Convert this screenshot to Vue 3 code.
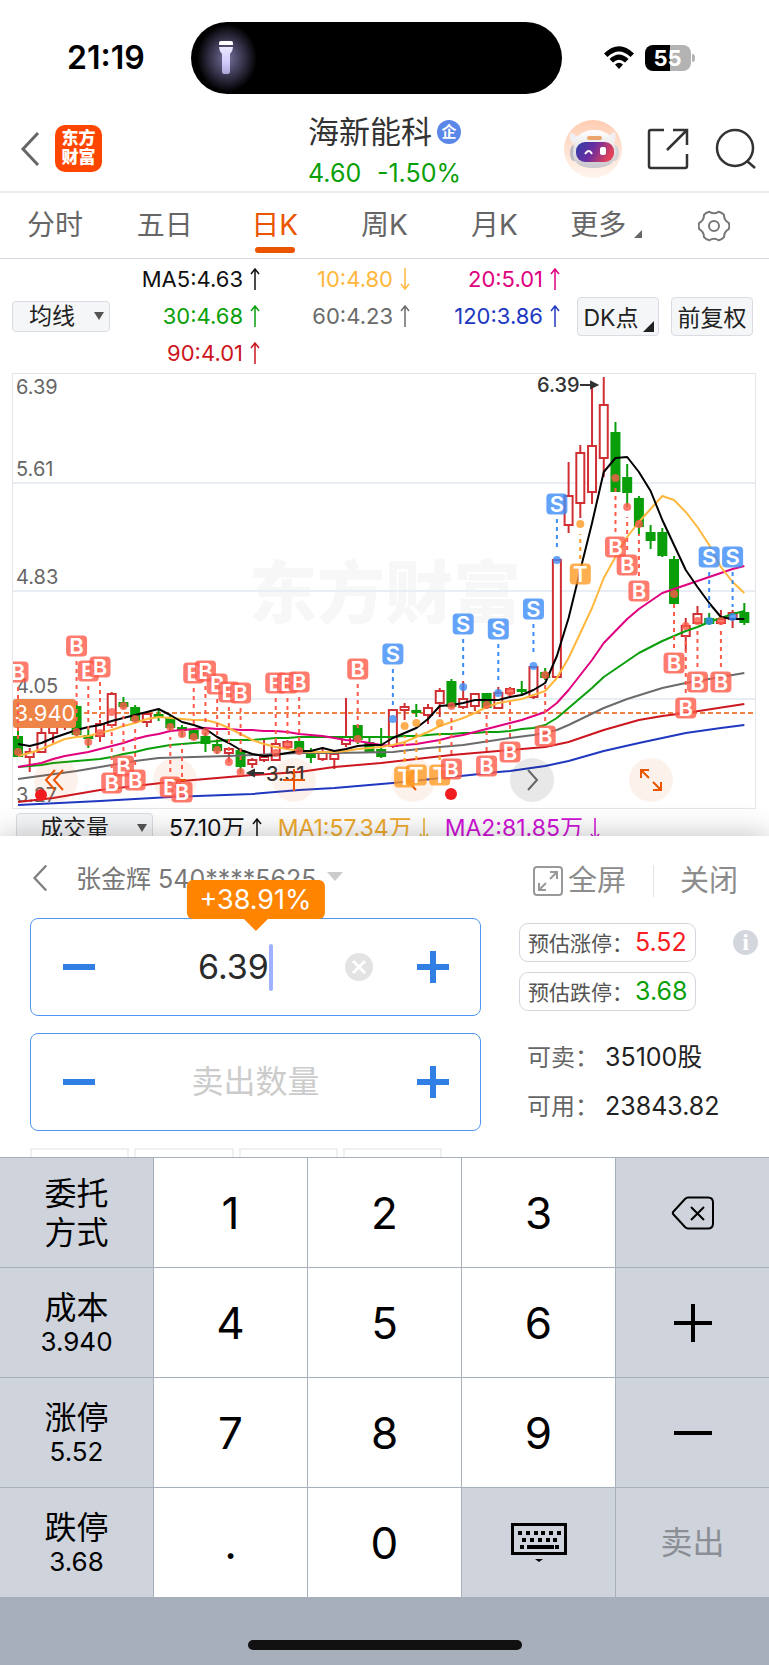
<template>
  <div class="page">
    <div class="status-bar">
      <span class="clock">21:19</span>
      <div class="island">
        <svg class="torch" viewBox="0 0 60 72" aria-hidden="true">
          <defs>
            <radialGradient id="glow">
              <stop offset="0" stop-color="#77729c" />
              <stop offset="0.55" stop-color="#37344c" />
              <stop offset="1" stop-color="#000" />
            </radialGradient>
            <linearGradient id="torchBody" x2="0" y2="1">
              <stop offset="0" stop-color="#ebe8ff" />
              <stop offset="0.6" stop-color="#cfc9fb" />
              <stop offset="1" stop-color="#aaa6d4" />
            </linearGradient>
          </defs>
          <ellipse cx="30" cy="36" rx="30" ry="34" fill="url(#glow)" />
          <path d="M22 23v-2q0-2 2-2h10q2 0 2 2v2z" fill="#fff" />
          <path d="M22 25h14q0 4-3 7v17q0 3-2 3h-4q-2 0-2-3V32q-3-3-3-7z" fill="url(#torchBody)" />
        </svg>
      </div>
      <div class="status-right">
        <svg class="wifi" viewBox="0 0 32 26" aria-hidden="true">
          <path d="M1 8.500Q16-6 31 8.500L27.500 12Q16 1 4.500 12z" />
          <path d="M6.500 14Q16 5 25.500 14L22 17.500Q16 12 10 17.500z" />
          <path d="M12 19.500Q16 16 20 19.500L16 24z" />
        </svg>
        <span class="battery">55</span>
      </div>
    </div>

    <header class="header">
      <div class="header-left">
        <button class="icon-button" aria-label="返回">
          <svg class="back" viewBox="0 0 20 36"><path d="M18 2L3 18l15 16" /></svg>
        </button>
        <a class="brand" href="#">东方<br />财富</a>
      </div>
      <div class="stock">
        <h1>海新能科<span class="tag-enterprise">企</span></h1>
        <p><span>4.60</span><span>-1.50%</span></p>
      </div>
      <div class="header-right">
        <button class="icon-button" aria-label="智能助手">
          <svg class="robot" viewBox="0 0 60 60">
            <defs>
              <linearGradient id="peach" x2="0" y2="1">
                <stop offset="0" stop-color="#ffcdb2" />
                <stop offset="1" stop-color="#fff5ef" />
              </linearGradient>
              <linearGradient id="visor" x2="1" y2="0.300">
                <stop offset="0" stop-color="#2c3fa8" />
                <stop offset="0.5" stop-color="#6a2da0" />
                <stop offset="1" stop-color="#e0405a" />
              </linearGradient>
              <linearGradient id="shell" x2="0" y2="1">
                <stop offset="0" stop-color="#fff" />
                <stop offset="1" stop-color="#c9c6cc" />
              </linearGradient>
            </defs>
            <circle cx="30" cy="30" r="29" fill="url(#peach)" />
            <path d="M10 25Q5 19 8 13q4 5 10 4zM50 25q5-7 1-13q-4 6-10 5z" fill="#f1eff2" />
            <ellipse cx="11" cy="34" rx="4" ry="8" fill="#b9b7c2" />
            <ellipse cx="52" cy="34" rx="4" ry="8" fill="#d5d2d8" />
            <path d="M10 33Q11 11 31 11t22 22q0 16-22 16T10 33z" fill="url(#shell)" />
            <rect x="24" y="17" width="15" height="4" rx="2" fill="#e9a56c" />
            <rect x="13" y="23" width="38" height="20" rx="9" fill="url(#visor)" />
            <path d="M22 35q4-6 7 0" fill="none" stroke="#fff" stroke-width="2" />
            <rect x="37" y="28" width="6" height="8" rx="2" fill="#fff" />
          </svg>
        </button>
        <button class="icon-button" aria-label="分享">
          <svg class="line-icon" viewBox="0 0 42 42">
            <path d="M17 2H4q-2 0-2 2v34q0 2 2 2h34q2 0 2-2V26M26 2h14v15M39 3L20 22" />
          </svg>
        </button>
        <button class="icon-button" aria-label="搜索">
          <svg class="line-icon" viewBox="0 0 42 42">
            <circle cx="20" cy="20" r="18" />
            <path d="M32 33l8 7" />
          </svg>
        </button>
      </div>
    </header>

    <nav class="tabs">
      <a v-for="tab in tabs" :key="tab" href="#" :class="{ active: tab === '日K' }">{{ tab }}</a>
      <a href="#" class="more">更多</a>
      <button class="icon-button" aria-label="设置">
        <svg class="gear" viewBox="0 0 32 32">
          <path
            d="M30.700 12.900Q32 16 30.700 19.100Q26 21.800 26 27.100Q24 29.500 20.600 30.300Q16 27 11.400 30.300Q8 29.500 6 27.100Q6 21.800 1.300 19.100Q0 16 1.300 12.900Q6 10.200 6 4.900Q8 2.500 11.400 1.700Q16 5 20.600 1.700Q24 2.500 26 4.900Q26 10.200 30.700 12.900z"
          />
          <circle cx="16" cy="16" r="5" />
        </svg>
      </button>
    </nav>

    <section class="indicators">
      <div class="picker">
        <select aria-label="主图指标">
          <option>均线</option>
        </select>
      </div>
      <ul class="averages">
        <li v-for="ma in averages" :key="ma.text" :class="ma.tone">
          {{ ma.text }}
          <svg class="trend" :class="{ down: ma.down }" viewBox="0 0 10 22">
            <path d="M5 22V1M1 6l4-5 4 5" />
          </svg>
        </li>
      </ul>
      <button class="tool corner">DK点</button>
      <button class="tool">前复权</button>
    </section>

    <section class="chart">
      <svg viewBox="0 0 769 441" class="layer-base" role="img" aria-label="日K线图">
        <text x="385" y="248" class="watermark">东方财富</text>
        <path d="M13 113H756M13 221H756M13 329H756" class="grid" />
        <rect x="12.500" y="3.500" width="743" height="435" class="frame" />
        <text v-for="tick in ticks" :key="tick.label" x="16" :y="tick.y" class="tick">
          {{ tick.label }}
        </text>
        <path d="M76 343H756" class="cost-line" />

        <g v-for="(c, i) in candles" :key="i" :class="c[0] ? 'rise' : 'fall'">
          <path :d="wick(c, i)" />
          <rect :x="xAt(i) - 4" :y="c[2]" width="8" :height="Math.max(c[3] - c[2], 1)" />
        </g>
        <polyline
          v-for="line in lines"
          :key="line.name"
          :points="line.points"
          :stroke="line.color"
          class="average-line"
        />

        <text x="537" y="22" class="extreme">6.39</text>
        <path d="M580 15h13M591 12l6 3-6 3z" class="arrow" />
        <text x="266" y="411" class="extreme">3.51</text>
        <path d="M264 403h-12M254 400l-6 3 6 3z" class="arrow" />
        <rect x="13" y="329" width="63" height="29" rx="3" class="cost-tag" />
        <text x="45" y="351" class="cost-text">3.940</text>
      </svg>

      <div class="chart-controls">
        <button v-for="c in controls" :key="c.name" :aria-label="c.name" :class="{ gray: c.gray }">
          <svg viewBox="0 0 44 44"><path :d="c.path" /></svg>
        </button>
      </div>

      <svg viewBox="0 0 769 441" class="layer-marks" aria-hidden="true">
        <clipPath id="plot"><rect x="13" y="3" width="743" height="436" /></clipPath>
        <g clip-path="url(#plot)">
          <g v-for="m in marks" :key="m[1]" :class="'mark-' + m[0]">
            <path :d="dash(m)" />
            <circle :cx="xAt(m[1])" :cy="m[3]" r="4" />
            <rect :x="xAt(m[1]) - 10.5" :y="m[2] - 10.5" width="21" height="21" rx="4" />
            <text :x="xAt(m[1])" :y="m[2] + 8">{{ m[0] }}</text>
          </g>
          <circle cx="41" cy="425" r="6" class="event" />
          <circle cx="451" cy="424" r="6" class="event" />
        </g>
      </svg>
    </section>

    <section class="volume">
      <div class="picker wide">
        <select aria-label="副图指标">
          <option>成交量</option>
        </select>
      </div>
      <span v-for="v in volumes" :key="v.text" :class="v.tone">
        {{ v.text }}
        <svg class="trend" :class="{ down: v.down }" viewBox="0 0 10 22">
          <path d="M5 22V1M1 6l4-5 4 5" />
        </svg>
      </span>
    </section>

    <section class="trade">
      <div class="trade-head">
        <button class="icon-button" aria-label="收起">
          <svg class="back small" viewBox="0 0 20 36"><path d="M18 2L3 18l15 16" /></svg>
        </button>
        <button class="account">张金辉 540****5625</button>
        <div class="head-actions">
          <button class="head-action">
            <svg class="fullscreen" viewBox="0 0 30 30">
              <rect x="1" y="1" width="28" height="28" rx="3" />
              <path d="M17 13l7-7M17 6h7v7M13 17l-7 7M6 17v7h7" />
            </svg>全屏
          </button>
          <button class="head-action close">关闭</button>
        </div>
      </div>

      <div class="trade-body">
        <div class="fields">
          <div class="stepper">
            <output class="bubble">+38.91%</output>
            <button class="step" aria-label="减少价格">
              <svg viewBox="0 0 32 32"><path d="M0 16h32" /></svg>
            </button>
            <div class="price">
              <input v-model="price" aria-label="卖出价格" inputmode="none" />
              <span class="caret"></span>
            </div>
            <button class="clear" aria-label="清空" @click="price = ''">
              <svg viewBox="0 0 28 28"><path d="M8 8l12 12M20 8L8 20" /></svg>
            </button>
            <button class="step" aria-label="增加价格">
              <svg viewBox="0 0 32 32"><path d="M0 16h32M16 0v32" /></svg>
            </button>
          </div>
          <div class="stepper">
            <button class="step" aria-label="减少数量">
              <svg viewBox="0 0 32 32"><path d="M0 16h32" /></svg>
            </button>
            <input
              v-model="amount"
              class="amount"
              aria-label="卖出数量"
              placeholder="卖出数量"
              inputmode="none"
            />
            <button class="step" aria-label="增加数量">
              <svg viewBox="0 0 32 32"><path d="M0 16h32M16 0v32" /></svg>
            </button>
          </div>
          <div class="shares"><i></i><i></i><i></i><i></i></div>
        </div>

        <div class="facts">
          <div class="limit-row">
            <button class="limit">预估涨停：<b class="red">5.52</b></button>
            <button class="info" aria-label="说明">i</button>
          </div>
          <div class="limit-row">
            <button class="limit">预估跌停：<b class="green">3.68</b></button>
          </div>
          <dl>
            <dt>可卖：</dt>
            <dd>35100股</dd>
            <dt>可用：</dt>
            <dd>23843.82</dd>
          </dl>
        </div>
      </div>
    </section>

    <section class="keypad">
      <button class="side">委托<br />方式</button>
      <button @click="press('1')">1</button>
      <button @click="press('2')">2</button>
      <button @click="press('3')">3</button>
      <button class="side" aria-label="删除" @click="price = price.slice(0, -1)">
        <svg class="backspace" viewBox="0 0 44 34">
          <path d="M17 1.500h20q5 0 5 5v21q0 5-5 5H17q-1.500 0-3-1.500L2.500 18.500q-1.500-1.500 0-3L14 3q1.500-1.500 3-1.500z" />
          <path d="M20 11l13 13M33 11L20 24" />
        </svg>
      </button>

      <button class="side">成本<small>3.940</small></button>
      <button @click="press('4')">4</button>
      <button @click="press('5')">5</button>
      <button @click="press('6')">6</button>
      <button class="side" aria-label="加">
        <svg class="sign" viewBox="0 0 38 38"><path d="M0 19h38M19 0v38" /></svg>
      </button>

      <button class="side">涨停<small>5.52</small></button>
      <button @click="press('7')">7</button>
      <button @click="press('8')">8</button>
      <button @click="press('9')">9</button>
      <button class="side" aria-label="减">
        <svg class="sign" viewBox="0 0 38 38"><path d="M0 19h38" /></svg>
      </button>

      <button class="side">跌停<small>3.68</small></button>
      <button @click="press('.')">.</button>
      <button @click="press('0')">0</button>
      <button class="side" aria-label="收起键盘">
        <svg class="keyboard" viewBox="0 0 56 40">
          <rect x="1.500" y="1.500" width="53" height="29" />
          <path
            d="M7 10h4M15 10h4M23 10h4M30 10h4M38 10h4M46 10h4M11 17h4M19 17h4M27 17h4M35 17h4M42 17h4M9 24h4M16 24h27M44 24h4"
          />
          <path d="M24 36h8l-4 3z" class="solid" />
        </svg>
      </button>
      <button class="side" disabled>卖出</button>
    </section>

    <div class="home-area"><span></span></div>
  </div>
</template>

<script setup>
import { ref } from "vue";

const price = ref("6.39");
const amount = ref("");

function press(key) {
  price.value += key;
}

const tabs = ["分时", "五日", "日K", "周K", "月K"];

const averages = [
  { text: "MA5:4.63", tone: "black" },
  { text: "10:4.80", tone: "yellow", down: true },
  { text: "20:5.01", tone: "pink" },
  { text: "30:4.68", tone: "green" },
  { text: "60:4.23", tone: "gray" },
  { text: "120:3.86", tone: "blue" },
  { text: "90:4.01", tone: "crimson" },
];

const volumes = [
  { text: "57.10万", tone: "black" },
  { text: "MA1:57.34万", tone: "gold", down: true },
  { text: "MA2:81.85万", tone: "purple", down: true },
];

const ticks = [
  { label: "6.39", y: 24 },
  { label: "5.61", y: 106 },
  { label: "4.83", y: 214 },
  { label: "4.05", y: 323 },
  { label: "3.27", y: 432 },
];

const controls = [
  { name: "最早", path: "M21 12l-9 10 9 10M29 12l-9 10 9 10" },
  { name: "缩小", path: "M11 22h22" },
  { name: "放大", path: "M11 22h22M22 11v22" },
  { name: "向前", path: "M25 12l-9 10 9 10" },
  { name: "向后", path: "M18 12l9 10-9 10", gray: true },
  { name: "全屏", path: "M12 20v-8h8M12 12l8 8M24 24l8 8M32 24v8h-8" },
];

// [rising, high, body top, body bottom, low]
const candles = [
  [0, 359, 367, 386, 387],
  [1, 378, 382, 387, 402],
  [1, 352, 363, 382, 383],
  [1, 345, 352, 363, 373],
  [1, 335, 345, 350, 360],
  [0, 333, 337, 364, 368],
  [0, 358, 366, 368, 378],
  [1, 350, 354, 366, 372],
  [1, 322, 324, 355, 356],
  [0, 327, 333, 336, 339],
  [0, 335, 338, 350, 352],
  [1, 342, 344, 352, 357],
  [0, 340, 345, 346, 351],
  [0, 345, 349, 357, 360],
  [0, 355, 358, 360, 367],
  [0, 359, 361, 368, 370],
  [0, 362, 367, 373, 382],
  [0, 370, 375, 380, 384],
  [1, 378, 379, 383, 392],
  [0, 378, 381, 396, 403],
  [1, 388, 390, 394, 398],
  [1, 370, 387, 390, 392],
  [1, 370, 374, 390, 391],
  [1, 370, 372, 377, 380],
  [0, 369, 372, 380, 382],
  [0, 378, 383, 387, 393],
  [1, 377, 382, 389, 391],
  [1, 382, 384, 389, 399],
  [1, 328, 367, 374, 377],
  [0, 356, 356, 369, 374],
  [0, 368, 373, 382, 383],
  [0, 358, 380, 386, 388],
  [1, 340, 340, 376, 378],
  [1, 333, 337, 340, 350],
  [0, 334, 341, 342, 347],
  [1, 334, 338, 345, 354],
  [1, 318, 321, 333, 347],
  [0, 309, 312, 336, 338],
  [1, 311, 329, 337, 339],
  [1, 323, 324, 336, 341],
  [0, 324, 324, 337, 339],
  [1, 317, 323, 338, 339],
  [1, 317, 319, 323, 327],
  [0, 311, 320, 321, 325],
  [1, 297, 297, 327, 329],
  [0, 298, 303, 307, 310],
  [1, 190, 190, 307, 307],
  [1, 92, 126, 155, 163],
  [1, 75, 83, 133, 148],
  [1, 12, 76, 122, 134],
  [1, 7, 35, 88, 107],
  [0, 52, 63, 121, 121],
  [0, 94, 108, 122, 137],
  [0, 126, 129, 156, 164],
  [0, 155, 163, 170, 179],
  [0, 158, 163, 185, 187],
  [0, 186, 190, 233, 236],
  [1, 248, 256, 266, 281],
  [1, 236, 244, 253, 254],
  [0, 243, 249, 253, 255],
  [1, 240, 249, 253, 255],
  [1, 240, 243, 249, 258],
  [0, 233, 243, 252, 255],
];

// [letter, candle index, badge y, dot y]
const marks = [
  ["B", 0, 302, 382],
  ["B", 5, 276, 362],
  ["B", 6, 301, 372],
  ["B", 7, 297, 363],
  ["B", 8, 413, 342],
  ["B", 9, 396, 336],
  ["B", 10, 410, 349],
  ["B", 13, 417, 357],
  ["B", 14, 422, 364],
  ["B", 15, 303, 367],
  ["B", 16, 301, 362],
  ["B", 17, 314, 380],
  ["B", 18, 322, 392],
  ["B", 19, 323, 402],
  ["B", 22, 313, 383],
  ["B", 23, 313, 375],
  ["B", 24, 312, 381],
  ["B", 29, 299, 369],
  ["S", 32, 284, 349],
  ["T", 33, 407, 356],
  ["T", 34, 405, 353],
  ["T", 36, 405, 353],
  ["B", 37, 399, 336],
  ["S", 38, 254, 317],
  ["B", 40, 396, 335],
  ["S", 41, 259, 323],
  ["B", 42, 382, 322],
  ["S", 44, 239, 296],
  ["B", 45, 366, 305],
  ["S", 46, 134, 190],
  ["T", 48, 204, 154],
  ["B", 51, 177, 108],
  ["B", 52, 195, 137],
  ["B", 53, 221, 154],
  ["B", 56, 293, 224],
  ["B", 57, 338, 256],
  ["B", 58, 312, 251],
  ["S", 59, 187, 251],
  ["B", 60, 312, 251],
  ["S", 61, 187, 247],
];

function xAt(i) {
  return 18 + i * 11.715;
}

function wick([, high, top, bottom, low], i) {
  const x = xAt(i);
  return `M${x} ${high}V${top}M${x} ${bottom}V${low}`;
}

function dash([, i, badge, dot]) {
  const dir = badge < dot ? 1 : -1;
  return `M${xAt(i)} ${badge + dir * 15}V${dot - dir * 10}`;
}

function daily(values) {
  return values.map((y, i) => `${xAt(i)},${y}`).join(" ");
}

function sparse(pairs) {
  return pairs.map(([i, y]) => `${xAt(i)},${y}`).join(" ");
}

const lines = [
  {
    name: "MA120",
    color: "#2038c0",
    points: sparse([
      [0, 435], [7, 431], [13, 427], [20, 424], [24, 420], [27, 418], [32, 413], [37, 407],
      [41, 402], [42, 401], [45, 396], [47, 391], [50, 381], [53, 373], [57, 363], [60, 358],
      [62, 355],
    ]),
  },
  {
    name: "MA90",
    color: "#cc1620",
    points: sparse([
      [0, 432], [3, 428], [7, 420], [10, 416], [13, 412], [16, 409], [20, 405], [24, 402],
      [27, 397], [31, 393], [34, 389], [37, 385], [40, 382], [42, 380], [45, 377], [47, 372],
      [50, 360], [53, 350], [55, 346], [57, 343], [62, 334],
    ]),
  },
  {
    name: "MA60",
    color: "#6b6b6b",
    points: sparse([
      [0, 409], [5, 401], [10, 391], [12, 388], [15, 387], [18, 386], [20, 385], [24, 383],
      [27, 383], [32, 382], [35, 378], [38, 375], [42, 368], [44, 365], [45, 363], [46, 360],
      [47, 355], [50, 338], [52, 329], [55, 318], [57, 313], [60, 307], [62, 303],
    ]),
  },
  {
    name: "MA30",
    color: "#0a9f0a",
    points: daily([
      397, 396, 395, 393, 392, 391, 390, 389, 387, 384, 382, 379, 377, 375, 374, 373, 372, 371,
      370, 370, 370, 369, 368, 368, 367, 367, 367, 367, 367, 367, 367, 367, 367, 366, 366, 365,
      364, 364, 363, 363, 362, 362, 361, 359, 358, 355, 348, 338, 328, 318, 307, 299, 291, 283,
      277, 271, 266, 261, 257, 252, 248, 244, 241,
    ]),
  },
  {
    name: "MA20",
    color: "#e0007f",
    points: daily([
      397, 395, 393, 389, 386, 384, 382, 379, 376, 373, 369, 366, 364, 361, 360, 359, 358, 359,
      359, 360, 360, 361, 361, 362, 364, 365, 366, 368, 370, 371, 373, 375, 376, 375, 374, 372,
      370, 367, 365, 362, 359, 356, 353, 350, 346, 342, 333, 320, 305, 290, 273, 261, 249, 239,
      231, 223, 219, 215, 211, 207, 203, 199, 196,
    ]),
  },
  {
    name: "MA10",
    color: "#ffb83d",
    points: daily([
      386, 383, 379, 374, 369, 367, 366, 363, 360, 356, 353, 349, 347, 348, 349, 350, 350, 353,
      358, 364, 370, 374, 377, 379, 381, 382, 382, 382, 381, 379, 378, 377, 375, 372, 367, 362,
      356, 352, 348, 343, 337, 333, 331, 329, 325, 321, 308, 288, 263, 238, 208, 187, 167, 152,
      139, 126, 130, 142, 157, 175, 197, 212, 223,
    ]),
  },
  {
    name: "MA5",
    color: "#000",
    points: daily([
      374, 376, 373, 368, 364, 360, 357, 355, 351, 348, 345, 342, 339, 345, 352, 355, 359, 367,
      373, 380, 384, 386, 385, 383, 381, 381, 378, 381, 379, 376, 375, 375, 368, 363, 358, 349,
      336, 335, 333, 330, 330, 330, 327, 325, 320, 313, 286, 248, 200, 153, 102, 88, 87, 102,
      121, 150, 175, 200, 217, 233, 247, 249, 249,
    ]),
  },
];
</script>

<style>
body {
  margin: 0;
  background: #fff;
}
</style>

<style scoped>
.page {
  font-family: Inter, "Noto Sans CJK SC", sans-serif;
  color: #222;
  overflow: hidden;
}
.page * {
  box-sizing: border-box;
}
button,
input,
select {
  font: inherit;
  color: inherit;
  margin: 0;
  padding: 0;
  border: 0;
  background: none;
  outline: none;
}
a {
  color: inherit;
  text-decoration: none;
}
svg {
  display: block;
  fill: none;
}
h1,
p,
ul,
dl,
dd {
  margin: 0;
  padding: 0;
  font-weight: 400;
}

.status-bar {
  display: grid;
  grid-template-columns: 1fr 371px 1fr;
  align-items: center;
  height: 104px;
  padding: 12px 17px 0 0;
}
.clock {
  padding-left: 67px;
  font-size: 32px;
  font-weight: 600;
  line-height: 72px;
  color: #000;
}
.island {
  height: 72px;
  border-radius: 36px;
  background: #000;
}
.torch {
  width: 60px;
  height: 72px;
  margin-left: 6px;
}
.status-right {
  display: flex;
  align-items: center;
  gap: 10px;
  padding-left: 41px;
}
.wifi {
  width: 32px;
  height: 26px;
  fill: #000;
}
.battery {
  position: relative;
  width: 46px;
  border-radius: 8px;
  background: linear-gradient(90deg, #000 55%, #b3b3b3 55%);
  color: #fff;
  font-size: 22px;
  font-weight: 700;
  line-height: 26px;
  text-align: center;
}
.battery::after {
  content: "";
  position: absolute;
  right: -4px;
  top: 9px;
  width: 3px;
  height: 8px;
  border-radius: 0 3px 3px 0;
  background: #b3b3b3;
}

.header {
  display: grid;
  grid-template-columns: 1fr auto 1fr;
  align-items: center;
  height: 89px;
  padding: 0 12px;
  border-bottom: 2px solid #ececec;
}
.header-left,
.header-right {
  display: flex;
  align-items: center;
}
.header-left {
  gap: 15px;
  padding-left: 8px;
}
.header-right {
  justify-content: flex-end;
  gap: 26px;
}
.back {
  width: 20px;
  height: 36px;
  stroke: #666;
  stroke-width: 3;
}
.back.small {
  width: 16px;
  height: 28px;
  stroke: #808080;
}
.brand {
  width: 47px;
  height: 47px;
  padding-top: 4px;
  border-radius: 10px;
  background: #ff4600;
  color: #fff;
  font-size: 17px;
  font-weight: 900;
  line-height: 19px;
  text-align: center;
}
.stock {
  padding-top: 7px;
  text-align: center;
}
.stock h1 {
  display: flex;
  align-items: center;
  gap: 5px;
  font-size: 31px;
  line-height: 42px;
  color: #333;
}
.tag-enterprise {
  width: 24px;
  height: 24px;
  border-radius: 50%;
  background: #5b87e8;
  color: #fff;
  font-size: 15px;
  font-weight: 700;
  line-height: 24px;
  text-align: center;
}
.stock p {
  display: flex;
  justify-content: space-between;
  font-size: 25px;
  line-height: 40px;
  color: #0a9f0a;
}
.robot {
  width: 60px;
  height: 60px;
}
.header-right .icon-button:first-child {
  margin-right: -2px;
}
.line-icon {
  width: 42px;
  height: 42px;
  stroke: #333;
  stroke-width: 2.5;
}

.tabs {
  display: grid;
  grid-template-columns: repeat(7, 1fr);
  align-items: stretch;
  height: 66px;
  border-bottom: 1px solid #d5dae2;
}
.tabs a {
  position: relative;
  font-size: 28px;
  line-height: 64px;
  text-align: center;
  color: #666;
}
.tabs .active {
  color: #eb5500;
}
.tabs .active::after {
  content: "";
  position: absolute;
  left: 50%;
  bottom: 5px;
  width: 40px;
  height: 6px;
  margin-left: -20px;
  border-radius: 3px;
  background: #eb5500;
}
.tabs .more {
  padding-left: 4px;
}
.more::after {
  content: "";
  display: inline-block;
  margin-left: 8px;
  vertical-align: -3px;
  border-left: 8px solid transparent;
  border-bottom: 8px solid #666;
}
.gear {
  width: 32px;
  height: 32px;
  margin: 0 auto;
  stroke: #777;
  stroke-width: 2;
}

.indicators {
  display: flex;
  align-items: center;
  height: 111px;
  padding: 3px 16px 0 12px;
}
.picker {
  position: relative;
  width: 98px;
}
.picker select {
  display: block;
  width: 100%;
  height: 31px;
  padding-left: 16px;
  border: 1px solid #d9dde3;
  border-radius: 4px;
  background: #f5f6f8;
  font-size: 23px;
  line-height: 29px;
  appearance: none;
}
.picker::after {
  content: "";
  position: absolute;
  right: 6px;
  top: 11px;
  border: 5px solid transparent;
  border-top: 8px solid #555;
  border-bottom: 0;
}
.averages {
  flex: 1;
  display: grid;
  grid-template-columns: repeat(3, 1fr);
  margin-right: 17px;
  list-style: none;
  font-size: 22px;
  line-height: 37px;
}
.averages li {
  display: flex;
  align-items: center;
  justify-content: flex-end;
  gap: 7px;
  white-space: nowrap;
}
.trend {
  width: 10px;
  height: 22px;
  stroke: currentColor;
  stroke-width: 1.5;
}
.trend.down {
  transform: rotate(180deg);
}
.tool {
  position: relative;
  width: 82px;
  height: 39px;
  border: 1px solid #d9dde3;
  border-radius: 4px;
  background: #f5f6f8;
  font-size: 23px;
}
.corner {
  margin-right: 12px;
  padding-right: 14px;
}
.corner::after {
  content: "";
  position: absolute;
  right: 4px;
  bottom: 3px;
  border-left: 11px solid transparent;
  border-bottom: 11px solid #222;
}
.black {
  color: #111;
}
.yellow {
  color: #ffb83d;
}
.pink {
  color: #e0007f;
}
.green {
  color: #0a9f0a;
}
.gray {
  color: #6b6b6b;
}
.blue {
  color: #2038c0;
}
.crimson {
  color: #cc1620;
}
.gold {
  color: #f0a92c;
}
.purple {
  color: #d012d8;
}
.red {
  color: #f81d22;
}

.chart {
  position: relative;
}
.layer-base {
  width: 100%;
}
.layer-marks {
  position: absolute;
  inset: 0;
  width: 100%;
  pointer-events: none;
}
.watermark {
  font-size: 68px;
  font-weight: 900;
  text-anchor: middle;
  fill: #f7f7f8;
}
.grid {
  stroke: #e9eef4;
  stroke-width: 2;
}
.frame {
  stroke: #e2e5ea;
}
.tick {
  font-size: 20px;
  fill: #666;
}
.extreme {
  font-size: 20px;
  font-weight: 500;
  fill: #333;
}
.arrow {
  stroke: #333;
  stroke-width: 2;
  fill: #333;
}
.cost-line {
  stroke: #f08040;
  stroke-width: 2;
  stroke-dasharray: 5 3;
}
.cost-tag {
  fill: #ef8448;
}
.cost-text {
  font-size: 22px;
  text-anchor: middle;
  fill: #fff;
}
.rise {
  stroke: #d03034;
  stroke-width: 2;
}
.rise rect {
  fill: #fff;
}
.fall {
  stroke: #0a9f0a;
  stroke-width: 2;
}
.fall rect {
  fill: #0a9f0a;
}
.average-line {
  stroke-width: 2;
  stroke-linejoin: round;
}
.mark-B {
  color: #ff5a4a;
}
.mark-S {
  color: #3c8cf8;
}
.mark-T {
  color: #ff9a24;
}
.layer-marks path {
  stroke: currentColor;
  stroke-width: 2;
  stroke-dasharray: 4 4;
}
.layer-marks circle {
  fill: currentColor;
  opacity: 0.8;
}
.layer-marks rect {
  fill: currentColor;
  opacity: 0.8;
}
.layer-marks text {
  font-size: 22px;
  font-weight: 600;
  text-anchor: middle;
  fill: #fff;
}
.layer-marks .event {
  fill: #f01c20;
  opacity: 1;
}
.chart-controls {
  position: absolute;
  left: 34px;
  right: 96px;
  bottom: 9px;
  display: flex;
  justify-content: space-between;
}
.chart-controls button {
  width: 44px;
  height: 44px;
  border-radius: 50%;
  background: rgba(235, 85, 0, 0.08);
}
.chart-controls svg {
  stroke: #eb5500;
  stroke-width: 2;
}
.chart-controls .gray {
  background: rgba(0, 0, 0, 0.09);
}
.chart-controls .gray svg {
  stroke: #666;
}

.volume {
  display: flex;
  gap: 16px;
  height: 25px;
  padding: 2px 16px 0;
  overflow: hidden;
  font-size: 23px;
  line-height: 31px;
  white-space: nowrap;
}
.volume span {
  display: flex;
  align-items: center;
  gap: 7px;
  height: 31px;
}
.picker.wide {
  width: 137px;
}
.wide select {
  padding-left: 23px;
}

.trade {
  position: relative;
  background: #fff;
  box-shadow: 0 0 28px rgba(0, 0, 0, 0.25);
}
.trade-head {
  display: flex;
  align-items: center;
  justify-content: space-between;
  height: 82px;
  padding: 2px 31px 0 32px;
}
.account {
  display: flex;
  align-items: center;
  margin: 0 auto 0 28px;
  padding-bottom: 3px;
  font-size: 25px;
  color: #777;
}
.account::after {
  content: "";
  margin-left: 11px;
  border: 8px solid transparent;
  border-top: 9px solid #ccc;
  border-bottom: 0;
}
.head-actions {
  display: flex;
  padding-top: 5px;
}
.head-action {
  display: flex;
  align-items: center;
  gap: 5px;
  font-size: 29px;
  line-height: 32px;
  color: #8c8c8c;
}
.close {
  margin-left: 27px;
  padding-left: 26px;
  border-left: 1px solid #e4e4e4;
}
.fullscreen {
  width: 30px;
  height: 30px;
  stroke: #999;
  stroke-width: 2;
}
.trade-body {
  display: grid;
  grid-template-columns: minmax(0, 1fr) 250px;
  gap: 38px;
  padding-left: 30px;
}
.stepper {
  position: relative;
  display: flex;
  align-items: center;
  height: 98px;
  margin-bottom: 17px;
  border: 1px solid #5096ee;
  border-radius: 8px;
}
.step {
  width: 95px;
}
.step svg {
  width: 32px;
  height: 32px;
  margin: 0 auto;
  stroke: #317fe5;
  stroke-width: 6;
}
.price {
  flex: 1;
  display: flex;
  align-items: center;
  justify-content: center;
}
.price input {
  field-sizing: content;
  font-size: 34px;
  line-height: 48px;
  color: #2b2b2b;
}
.caret {
  width: 4px;
  height: 47px;
  border-radius: 2px;
  background: #a0b2ff;
}
.clear {
  width: 28px;
  height: 28px;
  margin-right: 12px;
  border-radius: 50%;
  background: #e3e3e3;
}
.clear svg {
  stroke: #fff;
  stroke-width: 3;
}
.amount {
  flex: 1;
  min-width: 0;
  font-size: 32px;
  line-height: 48px;
  text-align: center;
}
.amount::placeholder {
  color: #ccc;
}
.bubble {
  position: absolute;
  left: 50%;
  bottom: 96px;
  padding: 0 13px;
  transform: translateX(-50%);
  border-radius: 6px;
  background: #ff8400;
  color: #fff;
  font-size: 27px;
  line-height: 39px;
}
.bubble::after {
  content: "";
  position: absolute;
  left: 50%;
  top: 100%;
  margin-left: -12px;
  border: 12px solid transparent;
  border-top-color: #ff8400;
  border-bottom: 0;
}
.shares {
  display: grid;
  grid-template-columns: repeat(4, 1fr);
  gap: 5px;
  margin-right: 39px;
}
.shares i {
  height: 9px;
  border: 2px solid #f0f0f0;
  border-bottom: 0;
}
.facts {
  padding-top: 5px;
}
.limit-row {
  display: flex;
  align-items: center;
  justify-content: space-between;
  margin-bottom: 10px;
  padding-right: 11px;
}
.limit {
  height: 39px;
  padding: 0 8px;
  border: 1px solid #d4d7de;
  border-radius: 9px;
  font-size: 21px;
  line-height: 37px;
  color: #555;
}
.limit b {
  margin-left: 2px;
  font-size: 25px;
  font-weight: 400;
}
.info {
  width: 25px;
  height: 25px;
  border-radius: 50%;
  background: #d3d7dd;
  color: #fff;
  font-family: "Liberation Serif", serif;
  font-size: 24px;
  font-weight: 700;
  line-height: 25px;
}
dl {
  display: grid;
  grid-template-columns: 78px 1fr;
  padding: 12px 0 0 8px;
  font-size: 25px;
  line-height: 49px;
}
dt {
  font-size: 24px;
  color: #666;
  white-space: nowrap;
}

.keypad {
  position: relative;
  display: grid;
  grid-template-columns: repeat(5, 1fr);
  grid-auto-rows: 109px;
  gap: 1px;
  padding: 1px 0 2px;
  background: #a7afbb;
}
.keypad button {
  background: #fff;
  color: #000;
  font-size: 44px;
}
.keypad .side {
  background: #cfd4dc;
  font-size: 32px;
  line-height: 39px;
}
.keypad .side:disabled {
  color: #8b8e94;
}
.keypad small {
  display: block;
  font-size: 26px;
  line-height: 30px;
}
.keypad svg {
  margin: 0 auto;
  stroke: #000;
}
.backspace {
  width: 44px;
  height: 34px;
  stroke-width: 2;
}
.sign {
  width: 38px;
  height: 38px;
  stroke-width: 4;
}
.keyboard {
  width: 56px;
  height: 40px;
  stroke-width: 3;
}
.keyboard path {
  stroke-width: 4;
}
.keyboard .solid {
  fill: #000;
  stroke-width: 0;
}
.home-area {
  position: relative;
  display: flex;
  justify-content: center;
  height: 67px;
  padding-top: 41px;
  background: #a7afbb;
}
.home-area span {
  width: 274px;
  height: 10px;
  border-radius: 5px;
  background: #111;
}
</style>
